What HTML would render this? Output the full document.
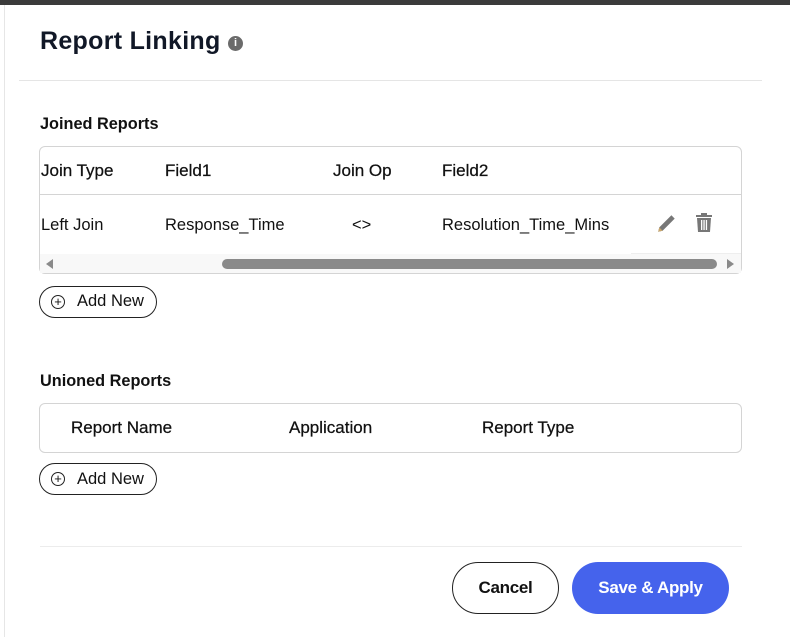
<!DOCTYPE html>
<html><head><style>
*{box-sizing:border-box;margin:0;padding:0}
body{width:790px;height:637px;background:#fff;font-family:"Liberation Sans",sans-serif;color:#111;position:relative;overflow:hidden}
.a{position:absolute}
.t{font-size:16.5px;white-space:nowrap}
.h{font-size:17px;white-space:nowrap;-webkit-text-stroke:0.25px #111}
.b{font-weight:bold}
</style></head><body>
<div class="a" style="left:0;top:0;width:790px;height:5px;background:#3b3b3b"></div>
<div class="a" style="left:4px;top:5px;width:1px;height:632px;background:#e6e6e6"></div>
<div class="a b" style="left:40px;top:27px;font-size:25px;letter-spacing:0.3px;color:#111827">Report Linking</div>
<div class="a" style="left:228px;top:36px;width:15px;height:15px;border-radius:50%;background:#6b6b6b;color:#fff;font-size:11px;font-weight:bold;text-align:center;line-height:15px">i</div>
<div class="a" style="left:19px;top:80px;width:743px;height:1px;background:#e5e5e5"></div>
<div class="a t b" style="left:40px;top:115px;font-size:16.3px">Joined Reports</div>
<div class="a" style="left:39px;top:146px;width:703px;height:128px;border:1px solid #d4d4d4;border-radius:6px"></div>
<div class="a" style="left:40px;top:194px;width:701px;height:1px;background:#d4d4d4"></div>
<div class="a h" style="left:41px;top:161px">Join Type</div>
<div class="a h" style="left:165px;top:161px">Field1</div>
<div class="a h" style="left:333px;top:161px">Join Op</div>
<div class="a h" style="left:442px;top:161px">Field2</div>
<div class="a t" style="left:41px;top:216px">Left Join</div>
<div class="a t" style="left:165px;top:216px">Response_Time</div>
<div class="a t" style="left:352px;top:216px">&lt;&gt;</div>
<div class="a t" style="left:442px;top:216px">Resolution_Time_Mins</div>
<svg class="a" style="left:656px;top:212px" width="22" height="22" viewBox="0 0 20 20"><path d="M2 18l1-4L14 3l3 3L6 17z" fill="#777"/><path d="M2 18l1-4 3 3z" fill="#c9a66b"/></svg>
<svg class="a" style="left:695px;top:213px" width="18" height="20" viewBox="0 0 18 20"><rect x="1" y="2" width="16" height="2" fill="#777"/><rect x="6" y="0" width="6" height="3" fill="#777"/><path d="M2 5h14l-1 14H3z" fill="#777"/><rect x="6" y="7" width="1.3" height="10" fill="#fff"/><rect x="8.4" y="7" width="1.3" height="10" fill="#fff"/><rect x="10.8" y="7" width="1.3" height="10" fill="#fff"/></svg>
<div class="a" style="left:40px;top:254px;width:701px;height:19px;background:#f8f8f8"></div>
<div class="a" style="left:631px;top:253px;width:110px;height:1px;background:#eee"></div>
<div class="a" style="left:46px;top:259px;width:0;height:0;border-top:5px solid transparent;border-bottom:5px solid transparent;border-right:7px solid #8a8a8a"></div>
<div class="a" style="left:727px;top:259px;width:0;height:0;border-top:5px solid transparent;border-bottom:5px solid transparent;border-left:7px solid #8a8a8a"></div>
<div class="a" style="left:222px;top:259px;width:495px;height:10px;border-radius:5px;background:#8a8a8a"></div>
<div class="a" style="left:39px;top:286px;width:118px;height:32px;border:1px solid #222;border-radius:16px"></div>
<div class="a" style="left:51px;top:295px;width:14px;height:14px;border:1px solid #222;border-radius:50%;font-size:13px;line-height:12px;text-align:center">+</div>
<div class="a t" style="left:77px;top:292px">Add New</div>
<div class="a t b" style="left:40px;top:372px;font-size:16.3px">Unioned Reports</div>
<div class="a" style="left:39px;top:403px;width:703px;height:50px;border:1px solid #d4d4d4;border-radius:6px"></div>
<div class="a h" style="left:71px;top:418px">Report Name</div>
<div class="a h" style="left:289px;top:418px">Application</div>
<div class="a h" style="left:482px;top:418px">Report Type</div>
<div class="a" style="left:39px;top:463px;width:118px;height:32px;border:1px solid #222;border-radius:16px"></div>
<div class="a" style="left:51px;top:472px;width:14px;height:14px;border:1px solid #222;border-radius:50%;font-size:13px;line-height:12px;text-align:center">+</div>
<div class="a t" style="left:77px;top:470px">Add New</div>
<div class="a" style="left:40px;top:546px;width:702px;height:1px;background:#ececec"></div>
<div class="a b" style="left:452px;top:562px;width:107px;height:52px;border:1px solid #222;border-radius:26px;font-size:17px;text-align:center;line-height:50px;letter-spacing:-0.3px">Cancel</div>
<div class="a b" style="left:572px;top:562px;width:157px;height:52px;background:#4563ec;color:#fff;border-radius:26px;font-size:17px;text-align:center;line-height:52px;letter-spacing:-0.3px">Save &amp; Apply</div>
</body></html>
